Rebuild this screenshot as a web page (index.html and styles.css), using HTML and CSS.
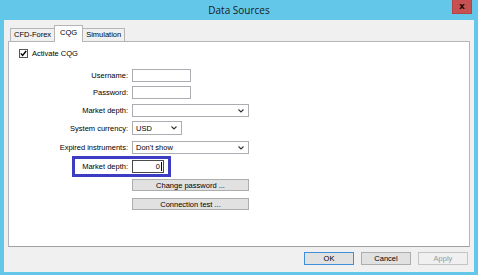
FILE: index.html
```html
<!DOCTYPE html>
<html lang="en">
<head>
    <meta charset="UTF-8">
    <meta name="viewport" content="width=device-width, initial-scale=1.0">
    <title>Data Sources</title>

    <link rel="stylesheet" href="styles.css">
</head>
<body>
    <div class="window">
        <div class="titlebar">
            <span class="title">Data Sources</span>
            <span class="close">x</span>
        </div>

        <div class="client">
            <div class="tabs">
                <div class="tab">CFD-Forex</div>
                <div class="tab active">CQG</div>
                <div class="tab">Simulation</div>
            </div>

            <div class="panel">
                <div class="check-row">
                    <span class="checkbox">
                        <svg width="7" height="7" viewBox="0 0 7 7"><polyline points="0.8,3.4 2.6,5.4 6.2,1" fill="none" stroke="#000" stroke-width="1.4"/></svg>
                    </span>
                    <span>Activate CQG</span>
                </div>

                <div class="row row-user">
                    <span class="label">Username:</span>
                    <span class="input w-short"></span>
                </div>
                <div class="row row-pass">
                    <span class="label">Password:</span>
                    <span class="input w-short"></span>
                </div>
                <div class="row row-depth">
                    <span class="label">Market depth:</span>
                    <span class="select w-long">
                        <span></span>
                        <svg class="chevron" width="6" height="4" viewBox="0 0 6 4"><polyline points="0.5,0.5 3,3 5.5,0.5" fill="none" stroke="#333" stroke-width="1.1"/></svg>
                    </span>
                </div>
                <div class="row row-currency">
                    <span class="label">System currency:</span>
                    <span class="select w-mid">
                        <span>USD</span>
                        <svg class="chevron" width="6" height="4" viewBox="0 0 6 4"><polyline points="0.5,0.5 3,3 5.5,0.5" fill="none" stroke="#333" stroke-width="1.1"/></svg>
                    </span>
                </div>
                <div class="row row-expired">
                    <span class="label">Expired instruments:</span>
                    <span class="select w-long">
                        <span>Don't show</span>
                        <svg class="chevron" width="6" height="4" viewBox="0 0 6 4"><polyline points="0.5,0.5 3,3 5.5,0.5" fill="none" stroke="#333" stroke-width="1.1"/></svg>
                    </span>
                </div>

                <!-- highlighted field -->
                <div class="highlight">
                    <span class="label label-box">Market depth:</span>
                    <span class="input number">0<span class="caret"></span></span>
                </div>

                <div class="row row-change">
                    <span class="label"></span>
                    <span class="btn w-long">Change password ...</span>
                </div>
                <div class="row row-test">
                    <span class="label"></span>
                    <span class="btn w-long">Connection test ...</span>
                </div>
            </div>

            <div class="footer">
                <span class="btn dlg default">OK</span>
                <span class="btn dlg">Cancel</span>
                <span class="btn dlg disabled">Apply</span>
            </div>
        </div>
    </div>
</body>
</html>
```

FILE: styles.css
```css
body {
    margin: 0;
    background-color: #63c7e9;
}
.window {
    width: 478px;
    height: 275px;
    display: flex;
    flex-direction: column;
    font-family: 'Liberation Sans', Arial, sans-serif;
    font-size: 7.5px;
    color: #000;
}
.titlebar {
    height: 20px;
    display: grid;
    grid-template-columns: 1fr auto 1fr;
    padding-right: 6px;
    padding-left: 6px;
}
.title {
    grid-column: 2;
    font-family: 'Open Sans', 'Noto Sans', sans-serif;
    font-size: 10px;
    line-height: 20px;
    color: #1a1a1a;
}
.close {
    grid-column: 3;
    justify-self: end;
    width: 20px;
    height: 14px;
    box-sizing: border-box;
    background-color: #c75050;
    border: 1px solid #b44444;
    border-top: none;
    text-align: center;
    font-family: 'DejaVu Sans', sans-serif;
    font-weight: bold;
    font-size: 9px;
    line-height: 12px;
    color: #111;
}
.client {
    margin: 0 4px 3px 4px;
    flex: 1;
    background-color: #f0f0f0;
    display: flex;
    flex-direction: column;
}
.tabs {
    height: 16px;
    margin-top: 5px;
    padding-left: 6px;
    display: flex;
    align-items: flex-end;
}
.tab {
    height: 13px;
    box-sizing: border-box;
    border: 1px solid #b5b5b5;
    border-bottom: none;
    margin-right: -1px;
    background-color: #f0f0f0;
    padding: 0 3px;
    line-height: 12px;
    text-align: center;
}
.tab.active {
    height: 17px;
    margin-bottom: -1px;
    background-color: #fff;
    position: relative;
    line-height: 14px;
    padding: 0 5px;
}
.panel {
    height: 206px;
    box-sizing: border-box;
    margin: 0 4px;
    background-color: #fff;
    border: 1px solid #b5b5b5;
    border-bottom-color: #a0a0a0;
}
.check-row {
    margin-top: 7px;
    padding-left: 10px;
    height: 9px;
    display: flex;
    align-items: center;
    gap: 4px;
}
.checkbox {
    width: 9px;
    height: 9px;
    box-sizing: border-box;
    border: 1px solid #555;
    display: flex;
    align-items: center;
    justify-content: center;
}
.row {
    display: flex;
    align-items: center;
    gap: 4px;
}
.label {
    width: 119px;
    text-align: right;
    white-space: nowrap;
}
.input, .select, .btn {
    box-sizing: border-box;
    height: 100%;
    display: flex;
    align-items: center;
}
.input {
    background-color: #fff;
    border: 1px solid #abadb3;
}
.select {
    background-color: #fff;
    border: 1px solid #abadb3;
    justify-content: space-between;
    padding: 0 4px 0 3px;
}
.w-short { width: 59px; }
.w-mid { width: 50px; }
.w-long { width: 117px; }
.row-user { margin-top: 11px; height: 13px; }
.row-pass { margin-top: 4px; height: 13px; }
.row-depth { margin-top: 5px; height: 13px; }
.row-currency { margin-top: 4px; height: 14px; }
.row-expired { margin-top: 6px; height: 13px; }
.row-change { margin-top: 2px; height: 12px; }
.row-test { margin-top: 7px; height: 12px; }
.highlight {
    margin-top: 2px;
    margin-left: 63px;
    width: 99px;
    height: 21px;
    box-sizing: border-box;
    border: 3px solid #3d3dc4;
    display: flex;
    align-items: center;
    gap: 4px;
}
.label-box {
    width: 53px;
}
.number {
    width: 32px;
    height: 13px;
    border-color: #4a4a4a;
    justify-content: flex-end;
    padding-right: 1px;
}
.caret {
    width: 1px;
    height: 9px;
    margin-left: 1px;
    background-color: #000;
}
.btn {
    justify-content: center;
    background-color: #e1e1e1;
    border: 1px solid #adadad;
}
.footer {
    flex: 1;
    display: flex;
    justify-content: flex-end;
    align-items: flex-start;
    gap: 7px;
    padding: 5px 6px 0 0;
}
.dlg {
    width: 50px;
    height: 13px;
}
.default {
    border-color: #3c8fd8;
}
.disabled {
    background-color: #f0f0f0;
    border-color: #c4c4c4;
    color: #9a9a9a;
}
```
